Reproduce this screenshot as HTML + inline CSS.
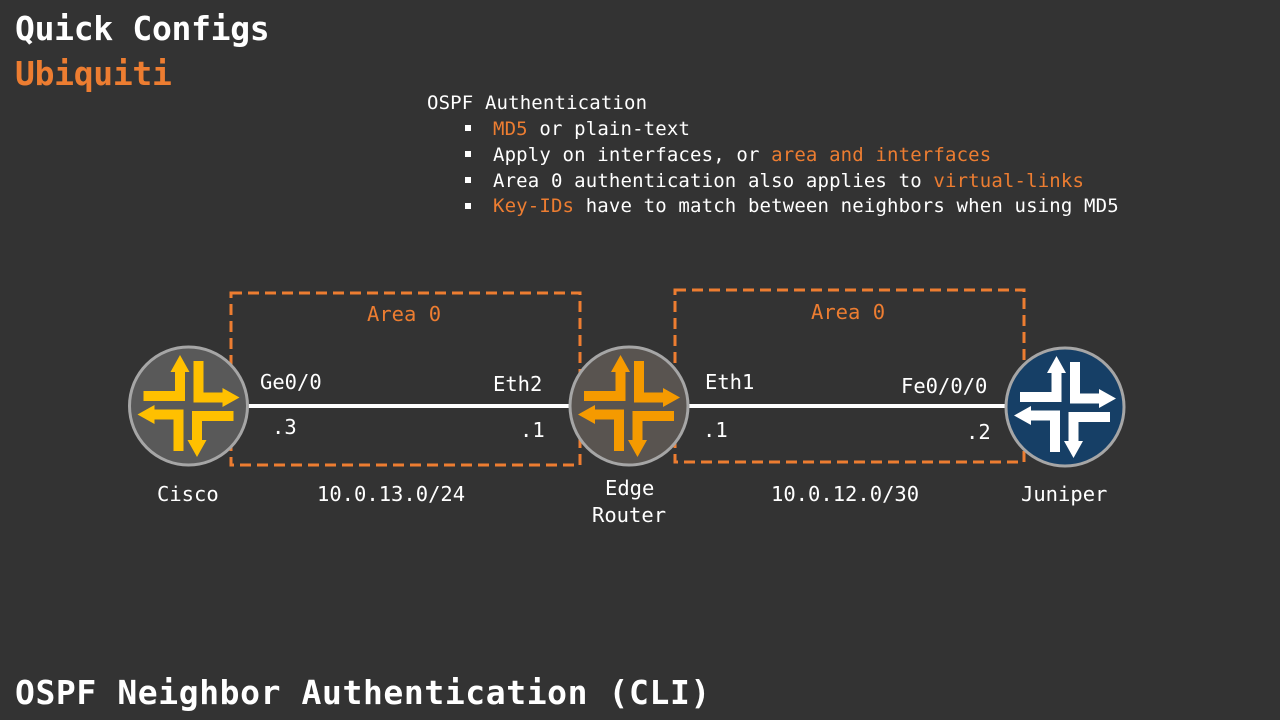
<!DOCTYPE html>
<html><head><meta charset="utf-8"><style>
body{margin:0;width:1280px;height:720px;background:#333333;overflow:hidden;position:relative;font-family:"DejaVu Sans Mono","Liberation Mono",monospace;color:#fff}
.t{position:absolute;white-space:pre;line-height:1}
.o{color:#ED7D31}
.b{font-weight:bold}
.s{font-size:20.5px}
.l{font-size:19px}
.sq{position:absolute;width:6px;height:6px;background:#fff}
</style></head><body>
<div class="t b" style="left:15px;top:12px;font-size:33px;letter-spacing:-0.3px">Quick Configs</div>
<div class="t b o" style="left:15px;top:57px;font-size:33px;letter-spacing:-0.3px">Ubiquiti</div>
<div class="t b" style="left:15px;top:676px;font-size:33px;letter-spacing:0.6px">OSPF Neighbor Authentication (CLI)</div>

<div class="t l" style="left:427px;top:94px;letter-spacing:0.15px">OSPF Authentication</div>
<div class="sq" style="left:465px;top:125px"></div>
<div class="sq" style="left:465px;top:151px"></div>
<div class="sq" style="left:465px;top:177px"></div>
<div class="sq" style="left:465px;top:203px"></div>
<div class="t l" style="left:493px;top:120px;letter-spacing:0.15px"><span class="o">MD5</span> or plain-text</div>
<div class="t l" style="left:493px;top:146px;letter-spacing:0.15px">Apply on interfaces, or <span class="o">area and interfaces</span></div>
<div class="t l" style="left:493px;top:172px;letter-spacing:0.15px">Area 0 authentication also applies to <span class="o">virtual-links</span></div>
<div class="t l" style="left:493px;top:197px;letter-spacing:0.15px"><span class="o">Key-IDs</span> have to match between neighbors when using MD5</div>

<svg width="1280" height="720" style="position:absolute;left:0;top:0">
<defs>
<path id="a" d="M5,-45 H15 V-13.5 H34 V-18 L51,-8.5 L34,1 V-3.5 H5 Z"/>
<g id="arr"><use href="#a"/><use href="#a" transform="rotate(90)"/><use href="#a" transform="rotate(180)"/><use href="#a" transform="rotate(270)"/></g>
</defs>
<g fill="none" stroke="#ED7D31" stroke-width="3" stroke-dasharray="11,6">
<rect x="231" y="293" width="349" height="172"/>
<rect x="675" y="290" width="349" height="172"/>
</g>
<line x1="245" y1="406" x2="572" y2="406" stroke="#fff" stroke-width="4"/>
<line x1="686" y1="406" x2="1008" y2="406" stroke="#fff" stroke-width="4"/>
<g transform="translate(188.5,406)"><circle r="59" fill="#595959" stroke="#a6a6a6" stroke-width="3"/><use href="#arr" fill="#FFC000"/></g>
<g transform="translate(629,406)"><circle r="59" fill="#595450" stroke="#a6a6a6" stroke-width="3"/><use href="#arr" fill="#F59A00"/></g>
<g transform="translate(1065,407)"><circle r="59" fill="#163F66" stroke="#a6a6a6" stroke-width="3"/><use href="#arr" fill="#fff"/></g>
</svg>

<div class="t s o" style="left:367px;top:304px">Area 0</div>
<div class="t s o" style="left:811px;top:302px">Area 0</div>
<div class="t s" style="left:260px;top:372px">Ge0/0</div>
<div class="t s" style="left:493px;top:374px">Eth2</div>
<div class="t s" style="left:705px;top:372px">Eth1</div>
<div class="t s" style="left:901px;top:376px">Fe0/0/0</div>
<div class="t s" style="left:272px;top:417px">.3</div>
<div class="t s" style="left:520px;top:420px">.1</div>
<div class="t s" style="left:703px;top:420px">.1</div>
<div class="t s" style="left:966px;top:422px">.2</div>
<div class="t s" style="left:157px;top:484px">Cisco</div>
<div class="t s" style="left:317px;top:484px">10.0.13.0/24</div>
<div class="t s" style="left:605px;top:478px">Edge</div>
<div class="t s" style="left:592px;top:505px">Router</div>
<div class="t s" style="left:771px;top:484px">10.0.12.0/30</div>
<div class="t s" style="left:1021px;top:484px">Juniper</div>
</body></html>
